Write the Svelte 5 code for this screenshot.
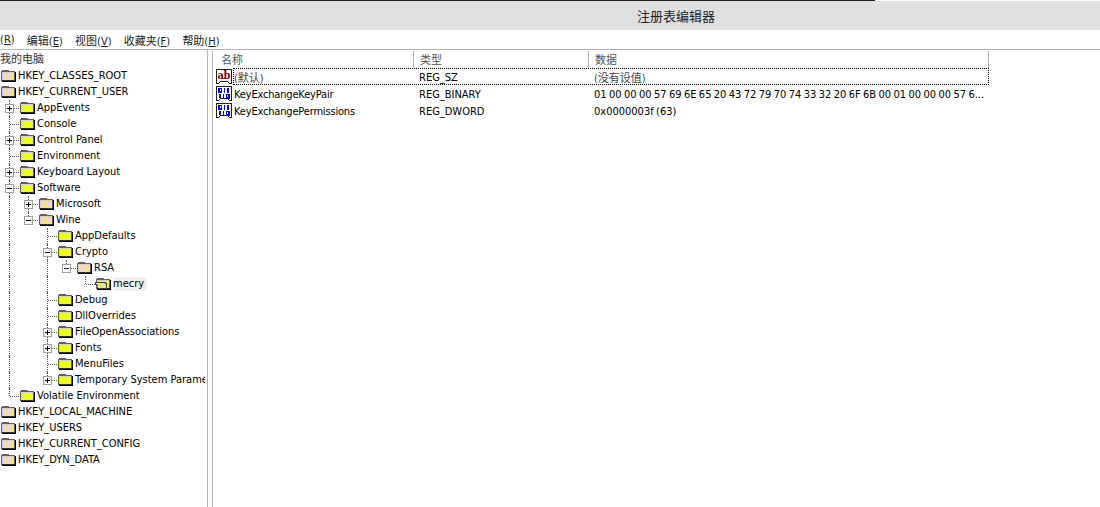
<script>
  const tree = [
    { l: 0, t: 'HKEY_CLASSES_ROOT', g: [] },
    { l: 0, t: 'HKEY_CURRENT_USER', g: [] },
    { l: 1, t: 'AppEvents', e: '+', g: ['t'] },
    { l: 1, t: 'Console', g: ['t'] },
    { l: 1, t: 'Control Panel', e: '+', g: ['t'] },
    { l: 1, t: 'Environment', g: ['t'] },
    { l: 1, t: 'Keyboard Layout', e: '+', g: ['t'] },
    { l: 1, t: 'Software', e: '-', g: ['t'] },
    { l: 2, t: 'Microsoft', e: '+', g: ['v', 't'] },
    { l: 2, t: 'Wine', e: '-', g: ['v', 'l'] },
    { l: 3, t: 'AppDefaults', g: ['v', 'n', 't'] },
    { l: 3, t: 'Crypto', e: '-', g: ['v', 'n', 't'] },
    { l: 4, t: 'RSA', e: '-', g: ['v', 'n', 'v', 'l'] },
    { l: 5, t: 'mecry', g: ['v', 'n', 'v', 'n', 'l'], open: true },
    { l: 3, t: 'Debug', g: ['v', 'n', 't'] },
    { l: 3, t: 'DllOverrides', g: ['v', 'n', 't'] },
    { l: 3, t: 'FileOpenAssociations', e: '+', g: ['v', 'n', 't'] },
    { l: 3, t: 'Fonts', e: '+', g: ['v', 'n', 't'] },
    { l: 3, t: 'MenuFiles', g: ['v', 'n', 't'] },
    { l: 3, t: 'Temporary System Parameters', e: '+', g: ['v', 'n', 'l'] },
    { l: 1, t: 'Volatile Environment', g: ['l'] },
    { l: 0, t: 'HKEY_LOCAL_MACHINE', g: [] },
    { l: 0, t: 'HKEY_USERS', g: [] },
    { l: 0, t: 'HKEY_CURRENT_CONFIG', g: [] },
    { l: 0, t: 'HKEY_DYN_DATA', g: [] }
  ];
  const menus = [
    ['', 'R'], ['编辑', 'E'], ['视图', 'V'], ['收藏夹', 'F'], ['帮助', 'H']
  ];
  const values = [
    { icon: 'ab', name: '(默认)', type: 'REG_SZ', data: '(没有设值)', cjk: true },
    { icon: 'bin', name: 'KeyExchangeKeyPair', type: 'REG_BINARY', data: '01 00 00 00 57 69 6E 65 20 43 72 79 70 74 33 32 20 6F 6B 00 01 00 00 00 57 6...' },
    { icon: 'bin', name: 'KeyExchangePermissions', type: 'REG_DWORD', data: '0x0000003f (63)' }
  ];
  function checker(x0, x1, y0, y1) {
    let d = '';
    for (let y = y0; y < y1; y++) {
      for (let x = x0; x < x1; x++) {
        if ((x + y) % 2 === 0) d += `M${x} ${y}h1v1h-1z`;
      }
    }
    return d;
  }
  const bodyDots = checker(3, 14, 3, 10);
  const frontDots = checker(2, 11, 5, 10);
</script>

{#snippet folder(open)}
  <svg class="folder" width="16" height="12" viewBox="0 0 16 12" shape-rendering="crispEdges">
    <path d="M2.5 2.5 V0.5 H8.5 V2.5 Z" fill="#d0d0c8" stroke="#606060" />
    <rect x="1.5" y="1.5" width="13" height="9" fill="#d0d0c8" stroke="#606060" />
    <rect x="3" y="3" width="11" height="7" fill="#ffff20" />
    <path d={bodyDots} fill="#dcdca0" />
    <path d="M15.5 2 V11.5 H2" fill="none" stroke="#000" />
    <path d="M2 10.5 H14.5" fill="none" stroke="#303030" />
    {#if open}
      <path d="M0.5 4.5 H10.5 V5.5 H11.5 V10.5 H3.5 V9.5 H2.5 V7.5 H1.5 V6.5 H0.5 Z" fill="#f0f070" stroke="#404040" />
      <path d={frontDots} fill="#dcdca0" />
    {/if}
  </svg>
{/snippet}

{#snippet regIcon(kind)}
  <svg class="regicon" width="16" height="16" viewBox="0 0 16 16" shape-rendering="crispEdges">
    <path d="M1.5 0.5 H15.5 V14.5 H13.5 L11.5 12.5 H4.5 L2.5 14.5 H0.5 V1 Z" fill="#fff" stroke="#202020" />
    {#if kind === 'ab'}
      <text x="1.5" y="10" class="ab">ab</text>
    {:else}
      <g fill="none" stroke="#0000f0" stroke-width="1.5">
        <rect x="2.75" y="2.25" width="2.5" height="3.5" />
        <path d="M8.5 1.5 V6.5 M12 1.5 V6.5" />
        <path d="M4 8 V12" />
        <path d="M7.5 8 V12" />
        <rect x="10.25" y="8.25" width="2.5" height="3.5" />
      </g>
    {/if}
  </svg>
{/snippet}

<div class="window">
  <div class="topline"></div>
  <header class="titlebar">注册表编辑器</header>
  <nav class="menubar">
    {#each menus as m}
      <span class="menu">{m[0]}(<u>{m[1]}</u>)</span>
    {/each}
  </nav>
  <div class="panes">
    <aside class="tree">
      <div class="row rootlabel"><span class="label">我的电脑</span></div>
      {#each tree as n}
        <div class="row">
          {#each n.g as g, i}
            <span class="cell {g}">
              {#if n.e && i === n.g.length - 1}
                <span class="exp">
                  <i class="h"></i>{#if n.e === '+'}<i class="vb"></i>{/if}
                </span>
              {/if}
            </span>
          {/each}
          {@render folder(n.open)}
          <span class="label" class:sel={n.open}>{n.t}</span>
        </div>
      {/each}
    </aside>
    <div class="splitter"></div>
    <section class="list">
      <div class="head">
        <span class="col c1">名称</span>
        <span class="col c2">类型</span>
        <span class="col c3">数据</span>
      </div>
      {#each values as v, i}
        <div class="vrow" class:focus={i === 0}>
          <span class="c1 name">{@render regIcon(v.icon)}<span class="nm" class:cjk={v.cjk}>{v.name}</span></span>
          <span class="c2">{v.type}</span>
          <span class="c3 dat" class:cjk={v.cjk}>{v.data}</span>
        </div>
      {/each}
    </section>
  </div>
</div>

<style>
  :global(body) { margin: 0; background: #fff; }
  .window {
    width: 1100px; height: 507px; overflow: hidden; display: flex; flex-direction: column;
    font-family: "DejaVu Sans Condensed", "DejaVu Sans", "Noto Sans CJK SC", sans-serif;
    font-stretch: condensed; font-size: 11px; color: #000;
  }
  .topline { height: 1px; width: 875px; background: #202124; flex: none; }
  .titlebar {
    height: 29px; flex: none; background: #dfe0e2; display: flex; align-items: center; justify-content: center;
    padding-left: 252px; box-sizing: border-box; font-size: 13px; color: #222;
    font-family: "Noto Sans CJK SC", sans-serif;
  }
  .menubar {
    height: 19px; flex: none; display: flex; align-items: center; border-bottom: 1px solid #b4b4b4;
    gap: 12.2px; color: #222;
  }
  .menu u { text-underline-offset: 1px; }
  .panes { flex: 1; display: flex; min-height: 0; }
  .tree { width: 205px; margin-right: 2px; flex: none; overflow: hidden; padding-top: 1px; box-sizing: border-box; }
  .row { height: 16px; display: flex; align-items: center; white-space: nowrap; }
  .rootlabel { height: 17px; color: #333; }
  .cell { width: 19px; height: 16px; flex: none; position: relative; }
  .cell.v::before, .cell.t::before {
    content: ""; position: absolute; left: 9px; top: 0; bottom: 0; border-left: 1px dotted #555;
  }
  .cell.l::before {
    content: ""; position: absolute; left: 9px; top: 0; height: 8px; border-left: 1px dotted #555;
  }
  .cell.t::after, .cell.l::after {
    content: ""; position: absolute; left: 10px; width: 9px; top: 8px; border-top: 1px dotted #555;
  }
  .exp {
    position: absolute; left: 5px; top: 4px; width: 7px; height: 7px; border: 1px solid #a0a0a0;
    background: #fff; z-index: 1;
  }
  .exp .h { position: absolute; left: 1px; top: 3px; width: 5px; height: 1px; background: #000; }
  .exp .vb { position: absolute; left: 3px; top: 1px; width: 1px; height: 5px; background: #000; }
  .folder { flex: none; margin-right: 2px; align-self: flex-start; margin-top: 2px; }
  .label { line-height: 14px; }
  .sel { background: #f0f0f0; padding-right: 3px; }
  .splitter {
    width: 6px; flex: none; box-sizing: border-box;
    border-left: 1px solid #b4b4b4; border-right: 1px solid #b4b4b4;
  }
  .list { flex: 1; min-width: 0; padding-top: 1px; }
  .head, .vrow { display: flex; width: 776px; box-sizing: border-box; white-space: nowrap; }
  .head { height: 17px; color: #555; font-family: "Noto Sans CJK SC", sans-serif; }
  .col { height: 17px; line-height: 17px; border-right: 1px solid #b4b4b4; box-sizing: border-box; }
  .c1 { width: 201px; flex: none; padding-left: 8px; box-sizing: border-box; }
  .c2 { width: 175px; flex: none; padding-left: 5px; box-sizing: border-box; }
  .c3 { width: 400px; flex: none; padding-left: 5px; box-sizing: border-box; }
  .col.c2, .col.c3 { padding-left: 6px; }
  .vrow { height: 17px; align-items: center; padding-top: 2px; position: relative; }
  .vrow.focus::after {
    content: ""; position: absolute; left: 20px; right: 0; top: 0; bottom: 0; border: 1px dotted #000;
  }
  .name { display: flex; align-items: center; padding-left: 3px; gap: 2px; }
  .nm { letter-spacing: -0.17px; }
  .dat { word-spacing: -0.75px; }
  .cjk { padding-bottom: 2px; color: #444; letter-spacing: 0; word-spacing: 0; }
  .regicon { flex: none; margin-top: -2px; }
  .ab { font-family: "DejaVu Serif", serif; font-weight: 700; font-size: 11px; letter-spacing: -0.5px; fill: #800000; }
</style>
